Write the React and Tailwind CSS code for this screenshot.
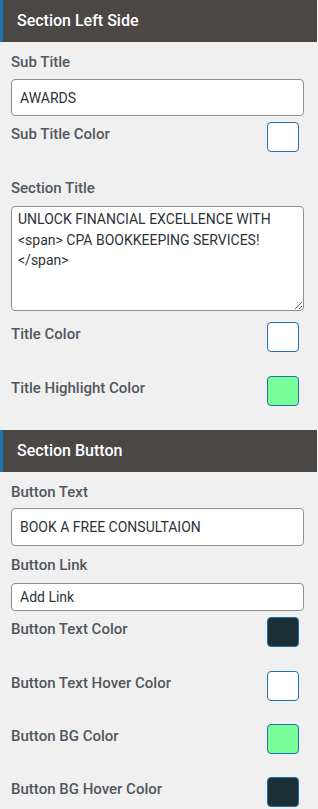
import React from 'react';

const SectionHeader = ({ title, className = '' }) => (
  <div className={`h-[42px] flex items-center border-l-[3px] border-[#1b74b4] bg-[#4b4745] pl-[14px] ${className}`}>
    <span className="text-[16px] font-medium text-white">{title}</span>
  </div>
);

const Label = ({ children, className = '' }) => (
  <div className={`text-[15px] leading-[20px] font-medium text-[#50575e] ${className}`}>{children}</div>
);

const ColorRow = ({ label, color, className = '' }) => (
  <div className={`flex items-start justify-between pr-[18px] ${className}`}>
    <Label className="mt-[2px]">{label}</Label>
    <div
      className="w-[32px] h-[30px] rounded-[4px] border border-[#2271b1]"
      style={{ backgroundColor: color }}
    />
  </div>
);

const TextInput = ({ value, height, className = '' }) => (
  <input
    type="text"
    defaultValue={value}
    className={`block w-[293px] rounded-[4px] border border-[#8c8f94] bg-white px-[8px] text-[14px] text-[#2c3338] outline-none ${height} ${className}`}
  />
);

export default function App() {
  return (
    <div className="min-h-screen bg-[#f0f0f0] font-['Roboto',sans-serif]">
      <div className="w-[317px]">
        <SectionHeader title="Section Left Side" />
        <div className="pl-[11px]">
          <Label className="mt-[10px]">Sub Title</Label>
          <TextInput value="AWARDS" height="h-[37px]" className="mt-[7px]" />
          <ColorRow label="Sub Title Color" color="#ffffff" className="mt-[6px]" />

          <Label className="mt-[26px]">Section Title</Label>
          <textarea
            defaultValue="UNLOCK FINANCIAL EXCELLENCE WITH <span> CPA BOOKKEEPING SERVICES! </span>"
            className="mt-[8px] block w-[293px] h-[105px] rounded-[4px] border border-[#8c8f94] bg-white px-[6px] pt-[2px] text-[14px] leading-[20.5px] text-[#2c3338] outline-none"
          />
          <ColorRow label="Title Color" color="#ffffff" className="mt-[11px]" />
          <ColorRow label="Title Highlight Color" color="#77fe98" className="mt-[24px]" />
        </div>

        <SectionHeader title="Section Button" className="mt-[24px]" />
        <div className="pl-[11px]">
          <Label className="mt-[10px]">Button Text</Label>
          <TextInput value="BOOK A FREE CONSULTAION" height="h-[38px]" className="mt-[6px]" />
          <Label className="mt-[9px]">Button Link</Label>
          <TextInput value="Add Link" height="h-[28px]" className="mt-[8px]" />
          <ColorRow label="Button Text Color" color="#1b3135" className="mt-[6px]" />
          <ColorRow label="Button Text Hover Color" color="#ffffff" className="mt-[24px]" />
          <ColorRow label="Button BG Color" color="#77fe98" className="mt-[23px]" />
          <ColorRow label="Button BG Hover Color" color="#1b3135" className="mt-[23px]" />
        </div>
      </div>
    </div>
  );
}
